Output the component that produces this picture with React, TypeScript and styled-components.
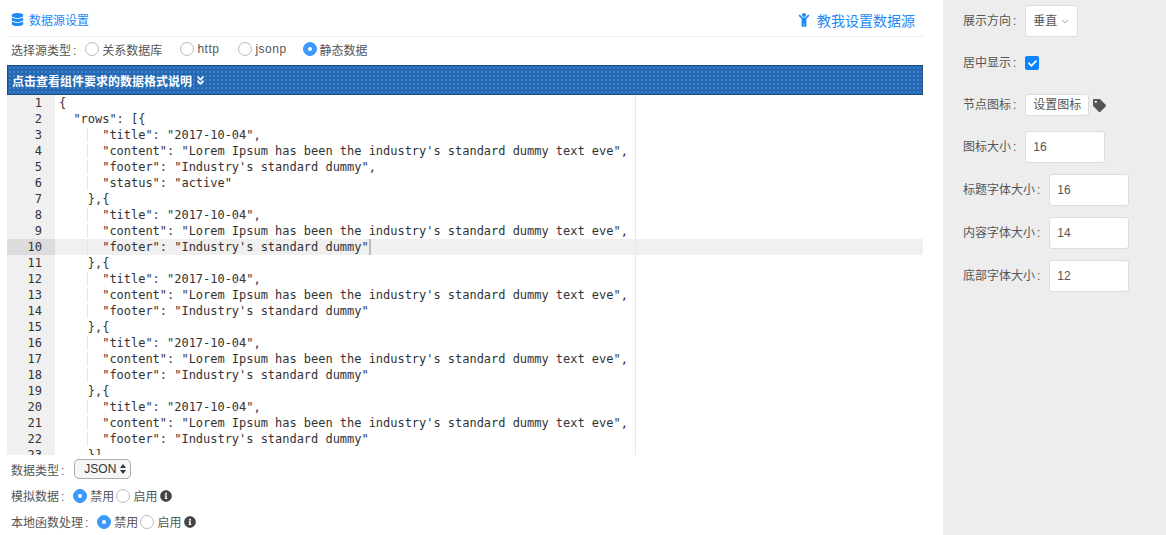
import React from 'react';
import styled, { createGlobalStyle } from 'styled-components';
import { FaDatabase, FaChild, FaAngleDoubleDown, FaTag, FaInfoCircle, FaCheck } from 'react-icons/fa';

const GlobalStyle = createGlobalStyle`
  html, body {
    margin: 0;
    padding: 0;
    background: #fff;
    overflow: hidden;
  }
  body {
    font-family: 'Liberation Sans', 'Noto Sans CJK SC', sans-serif;
    font-size: 12px;
    color: #555;
  }
`;

const Page = styled.div`
  display: flex;
  width: 1166px;
  height: 535px;
  overflow: hidden;
`;

const Main = styled.div`
  width: 916px;
  padding: 0 20px 0 7px;
  flex: none;
`;

const TitleBar = styled.div`
  display: flex;
  align-items: center;
  justify-content: space-between;
  height: 33px;
  padding: 3px 8px 0 4px;
  border-bottom: 1px solid #eee;
  color: #1e88f5;
`;

const TitleLeft = styled.div`
  display: flex;
  align-items: center;
  gap: 5px;
  font-size: 12px;
`;

const TitleRight = styled.div`
  display: flex;
  align-items: center;
  gap: 6px;
  font-size: 14px;
`;

const SourceRow = styled.div`
  display: flex;
  align-items: center;
  height: 24px;
  padding: 0 0 4px 4px;
`;

const Colon = styled.span`
  margin-left: 2px;
`;

const RowLabel = styled.span`
  margin-right: 9px;
`;

const RadioItem = styled.label<{ $gap?: number }>`
  display: flex;
  align-items: center;
  gap: 3px;
  margin-right: ${p => p.$gap ?? 0}px;
`;

const LatinText = styled.span`
  letter-spacing: 0.5px;
`;

const Radio = styled.span<{ $on?: boolean }>`
  box-sizing: border-box;
  width: 14px;
  height: 14px;
  border-radius: 50%;
  background: ${p => (p.$on ? '#3b99fc' : '#fff')};
  border: 1px solid ${p => (p.$on ? '#3b99fc' : '#bbb')};
  display: flex;
  align-items: center;
  justify-content: center;
  &::after {
    content: '';
    width: 4px;
    height: 4px;
    border-radius: 50%;
    background: ${p => (p.$on ? '#fff' : 'transparent')};
  }
`;

const Banner = styled.div`
  box-sizing: border-box;
  height: 30px;
  padding: 0 4px;
  display: flex;
  align-items: center;
  gap: 3px;
  border: 1px solid #1d4f86;
  background-color: #2467b2;
  background-image: radial-gradient(#3f80c6 1px, transparent 1px);
  background-size: 4px 4px;
  color: #fff;
  font-weight: 700;
  font-size: 12px;
`;

const Editor = styled.div`
  position: relative;
  height: 360px;
  overflow: hidden;
  font-family: 'DejaVu Sans Mono', 'Liberation Mono', monospace;
  font-size: 12px;
  letter-spacing: -0.024px;
  line-height: 16px;
  color: #333;
`;

const PrintMargin = styled.div`
  position: absolute;
  top: 0;
  bottom: 0;
  left: 628px;
  width: 1px;
  background: #e8e8e8;
`;

const Line = styled.div<{ $active?: boolean }>`
  display: flex;
  height: 16px;
  background: ${p => (p.$active ? '#f0f0f0' : 'transparent')};
`;

const Gutter = styled.div<{ $active?: boolean }>`
  flex: none;
  box-sizing: border-box;
  width: 48px;
  padding-right: 13px;
  text-align: right;
  background: ${p => (p.$active ? '#dcdcdc' : '#f0f0f0')};
`;

const Code = styled.div`
  padding-left: 4px;
  white-space: pre;
`;

const Indent = styled.span`
  background: linear-gradient(#e4e4e4, #e4e4e4) no-repeat 28px 0 / 1px 100%;
`;

const Cursor = styled.span`
  display: inline-block;
  width: 2px;
  height: 16px;
  vertical-align: top;
  background: #bbb;
`;

const FormRow = styled.div<{ $height: number }>`
  display: flex;
  align-items: center;
  height: ${p => p.$height}px;
  padding-left: 4px;
`;

const FakeSelect = styled.div`
  box-sizing: border-box;
  width: 57px;
  height: 20px;
  margin-left: 1px;
  border: 1px solid #aaa;
  border-radius: 5px;
  background: #f6f6f6;
  color: #333;
  display: flex;
  align-items: center;
  justify-content: space-between;
  padding: 0 4px 0 9px;
`;

const Arrows = styled.span`
  display: flex;
  flex-direction: column;
  gap: 2px;
  &::before, &::after {
    content: '';
    border-left: 3px solid transparent;
    border-right: 3px solid transparent;
  }
  &::before { border-bottom: 4px solid #333; }
  &::after { border-top: 4px solid #333; }
`;

const Info = styled(FaInfoCircle)`
  color: #444;
  font-size: 12px;
  margin-left: 3px;
`;

const Side = styled.div`
  flex: 1;
  background: #ededed;
  padding: 5px 0 0 20px;
  display: flex;
  flex-direction: column;
`;

const SideRow = styled.div<{ $height: number }>`
  display: flex;
  align-items: center;
  height: ${p => p.$height}px;
`;

const SideLabel = styled.span`
  margin: 0 9px 3px 0;
`;

const SideBox = styled.div<{ $width?: number; $height: number; $cjk?: boolean }>`
  box-sizing: border-box;
  background: #fff;
  border: 1px solid #ddd;
  border-radius: 3px;
  width: ${p => (p.$width ? `${p.$width}px` : 'auto')};
  height: ${p => p.$height}px;
  display: flex;
  align-items: center;
  padding: 0 7px ${p => (p.$cjk ? 3 : 0)}px;
`;

const Chevron = styled.svg`
  margin: 3px 1px 0 4px;
`;

const Checkbox = styled.span`
  width: 14px;
  height: 14px;
  border-radius: 2px;
  background: #0a84ff;
  color: #fff;
  display: flex;
  align-items: center;
  justify-content: center;
  font-size: 9px;
`;

const TagIcon = styled(FaTag)`
  color: #555;
  font-size: 13px;
  margin-left: 4px;
`;

const rows = [
  '{',
  '  "rows": [{',
  '      "title": "2017-10-04",',
  '      "content": "Lorem Ipsum has been the industry\'s standard dummy text eve",',
  '      "footer": "Industry\'s standard dummy",',
  '      "status": "active"',
  '    },{',
  '      "title": "2017-10-04",',
  '      "content": "Lorem Ipsum has been the industry\'s standard dummy text eve",',
  '      "footer": "Industry\'s standard dummy"',
  '    },{',
  '      "title": "2017-10-04",',
  '      "content": "Lorem Ipsum has been the industry\'s standard dummy text eve",',
  '      "footer": "Industry\'s standard dummy"',
  '    },{',
  '      "title": "2017-10-04",',
  '      "content": "Lorem Ipsum has been the industry\'s standard dummy text eve",',
  '      "footer": "Industry\'s standard dummy"',
  '    },{',
  '      "title": "2017-10-04",',
  '      "content": "Lorem Ipsum has been the industry\'s standard dummy text eve",',
  '      "footer": "Industry\'s standard dummy"',
  '    }]',
];

function CodeLine({ text, active }: { text: string; active: boolean }) {
  const body = text.trimStart();
  const pad = text.slice(0, text.length - body.length);
  return (
    <Code>
      {pad.length > 4 ? <Indent>{pad}</Indent> : pad}
      {body}
      {active && <Cursor />}
    </Code>
  );
}

export default function App() {
  return (
    <Page>
      <GlobalStyle />
      <Main>
        <TitleBar>
          <TitleLeft>
            <FaDatabase size={13} />
            数据源设置
          </TitleLeft>
          <TitleRight>
            <FaChild size={14} />
            教我设置数据源
          </TitleRight>
        </TitleBar>
        <SourceRow>
          <RowLabel>选择源类型<Colon>:</Colon></RowLabel>
          <RadioItem $gap={18}><Radio />关系数据库</RadioItem>
          <RadioItem $gap={19}><Radio /><LatinText>http</LatinText></RadioItem>
          <RadioItem $gap={16}><Radio /><LatinText>jsonp</LatinText></RadioItem>
          <RadioItem><Radio $on />静态数据</RadioItem>
        </SourceRow>
        <Banner>
          点击查看组件要求的数据格式说明
          <FaAngleDoubleDown size={11} />
        </Banner>
        <Editor>
          <PrintMargin />
          {rows.map((text, i) => (
            <Line key={i} $active={i === 9}>
              <Gutter $active={i === 9}>{i + 1}</Gutter>
              <CodeLine text={text} active={i === 9} />
            </Line>
          ))}
        </Editor>
        <FormRow $height={28}>
          <RowLabel>数据类型<Colon>:</Colon></RowLabel>
          <FakeSelect>JSON<Arrows /></FakeSelect>
        </FormRow>
        <FormRow $height={25}>
          <RowLabel>模拟数据<Colon>:</Colon></RowLabel>
          <RadioItem $gap={2}><Radio $on />禁用</RadioItem>
          <RadioItem><Radio />启用</RadioItem>
          <Info />
        </FormRow>
        <FormRow $height={27}>
          <RowLabel>本地函数处理<Colon>:</Colon></RowLabel>
          <RadioItem $gap={2}><Radio $on />禁用</RadioItem>
          <RadioItem><Radio />启用</RadioItem>
          <Info />
        </FormRow>
      </Main>
      <Side>
        <SideRow $height={32}>
          <SideLabel>展示方向<Colon>:</Colon></SideLabel>
          <SideBox $height={32} $cjk>
            垂直
            <Chevron width="8" height="5" viewBox="0 0 8 5">
              <path d="M1 1l3 3 3-3" fill="none" stroke="#aaa" />
            </Chevron>
          </SideBox>
        </SideRow>
        <SideRow $height={52}>
          <SideLabel>居中显示<Colon>:</Colon></SideLabel>
          <Checkbox><FaCheck /></Checkbox>
        </SideRow>
        <SideRow $height={32}>
          <SideLabel>节点图标<Colon>:</Colon></SideLabel>
          <SideBox $height={22} $cjk>设置图标</SideBox>
          <TagIcon />
        </SideRow>
        <SideRow $height={52}>
          <SideLabel>图标大小<Colon>:</Colon></SideLabel>
          <SideBox $width={80} $height={32}>16</SideBox>
        </SideRow>
        <SideRow $height={34}>
          <SideLabel>标题字体大小<Colon>:</Colon></SideLabel>
          <SideBox $width={80} $height={32}>16</SideBox>
        </SideRow>
        <SideRow $height={52}>
          <SideLabel>内容字体大小<Colon>:</Colon></SideLabel>
          <SideBox $width={80} $height={32}>14</SideBox>
        </SideRow>
        <SideRow $height={34}>
          <SideLabel>底部字体大小<Colon>:</Colon></SideLabel>
          <SideBox $width={80} $height={32}>12</SideBox>
        </SideRow>
      </Side>
    </Page>
  );
}
